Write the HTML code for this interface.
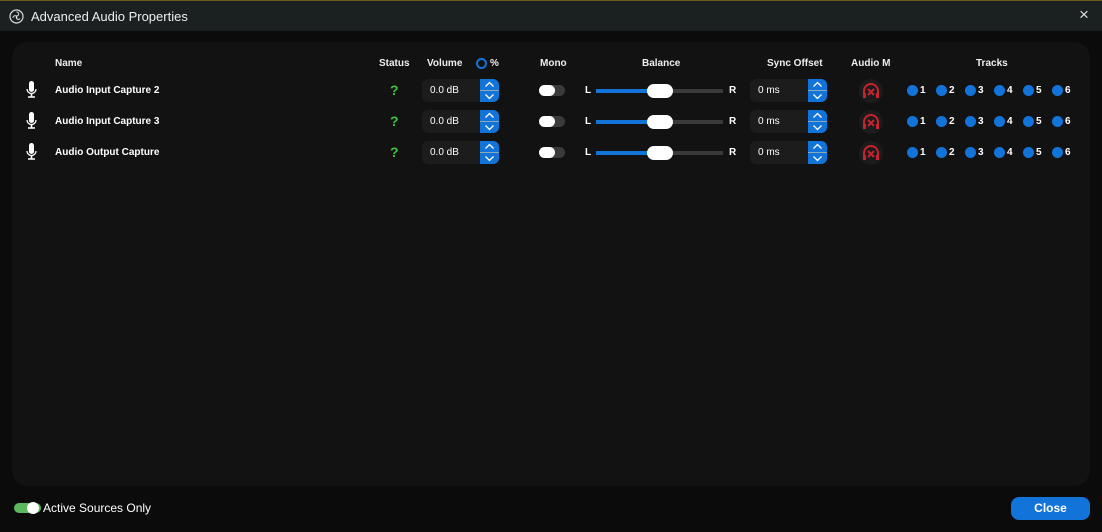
<!DOCTYPE html>
<html><head><style>
*{margin:0;padding:0;box-sizing:border-box}
body{width:1102px;height:532px;background:#0b0b0b;font-family:"Liberation Sans",sans-serif;color:#fff;position:relative;overflow:hidden}
.a{position:absolute}
.title{left:0;top:0;width:1102px;height:31px;background:#1b2020;border-top:1px solid #6b5a1c}
.panel{left:12px;top:42px;width:1078px;height:444px;background:#121212;border-radius:16px}
.h{font-size:10px;font-weight:bold;top:58px;color:#eee}
.n{font-size:10px;font-weight:bold;left:55px}
.sp{width:78px;height:23px;background:#1c1c1c;border-radius:6px;font-size:10px;padding:6px 0 0 8px}
.btn{width:19px;height:23px;background:#1273d8;border-radius:0 6px 6px 0;left:58px;top:0}
.btn:after{content:"";position:absolute;left:0;top:11px;width:19px;height:1px;background:#8ab}
.btn svg{position:absolute;left:4px}
.tg{width:26px;height:11px;background:#3a3a3a;border-radius:6px}
.tg:before{content:"";position:absolute;left:0;top:0;width:16px;height:11px;background:#fff;border-radius:6px}
.dot{width:11px;height:11px;border-radius:50%;background:#1273d8}
.tn{font-size:10px;font-weight:bold}
</style></head><body>
<div class="a title">
<svg class="a" style="left:9px;top:8px" width="15" height="15" viewBox="0 0 15 15"><circle cx="7.5" cy="7.5" r="6.5" fill="none" stroke="#ddd" stroke-width="1.2"/><path d="M7.5 3a2 2 0 1 1-1 3.5M4 9a2 2 0 1 1 3.5 1M11 9.5a2 2 0 1 1-2-3" fill="none" stroke="#ddd" stroke-width="1"/></svg>
<div class="a" style="left:31px;top:8px;font-size:13px;color:#eee">Advanced Audio Properties</div>
<div class="a" style="left:1079px;top:4px;font-size:17px;color:#ddd">×</div>
</div>
<div class="a panel"></div>
<div class="a h" style="left:55px">Name</div>
<div class="a h" style="left:379px">Status</div>
<div class="a h" style="left:427px">Volume</div>
<div class="a" style="left:476px;top:58px;width:11px;height:11px;border:2px solid #1273d8;border-radius:50%"></div>
<div class="a h" style="left:490px">%</div>
<div class="a h" style="left:540px">Mono</div>
<div class="a h" style="left:642px">Balance</div>
<div class="a h" style="left:767px">Sync Offset</div>
<div class="a h" style="left:851px">Audio M</div>
<div class="a h" style="left:976px">Tracks</div>

<div class="a" style="left:0;top:79px;width:1102px;height:24px">
<svg class="a" style="left:26px;top:2px" width="11" height="18" viewBox="0 0 11 18"><rect x="3" y="0" width="5" height="11" rx="2.5" fill="#fff"/><path d="M1 8a4.5 4.5 0 0 0 9 0" fill="none" stroke="#fff" stroke-width="1.3"/><path d="M5.5 12.5v3M2 16h7" stroke="#fff" stroke-width="1.6"/></svg>
<div class="a n" style="top:6px">Audio Input Capture 2</div>
<div class="a" style="left:390px;top:3px;color:#3cc43c;font-weight:bold;font-size:14px">?</div>
<div class="a sp" style="left:422px;top:0">0.0 dB<div class="a btn"><svg style="top:2px" width="11" height="7"><path d="M1.5 5.5l4-4 4 4" fill="none" stroke="#fff" stroke-width="1.3"/></svg><svg style="top:14px" width="11" height="7"><path d="M1.5 1.5l4 4 4-4" fill="none" stroke="#fff" stroke-width="1.3"/></svg></div></div>
<div class="a tg" style="left:539px;top:6px"></div>
<div class="a tn" style="left:585px;top:6px">L</div>
<div class="a" style="left:596px;top:10px;width:127px;height:4px;background:#3a3a3a"></div>
<div class="a" style="left:596px;top:10px;width:52px;height:4px;background:#1273d8"></div>
<div class="a" style="left:647px;top:5px;width:26px;height:14px;background:#fff;border-radius:7px"></div>
<div class="a tn" style="left:729px;top:6px">R</div>
<div class="a sp" style="left:750px;top:0">0 ms<div class="a btn"><svg style="top:2px" width="11" height="7"><path d="M1.5 5.5l4-4 4 4" fill="none" stroke="#fff" stroke-width="1.3"/></svg><svg style="top:14px" width="11" height="7"><path d="M1.5 1.5l4 4 4-4" fill="none" stroke="#fff" stroke-width="1.3"/></svg></div></div>
<div class="a" style="left:859px;top:0;width:24px;height:24px;border-radius:50%;background:#1b1b1b"></div>
<svg class="a" style="left:862px;top:4px" width="18" height="16" viewBox="0 0 18 16"><path d="M2 12V8a7 7 0 0 1 14 0v4" fill="none" stroke="#c8222e" stroke-width="2"/><rect x="1" y="10" width="3" height="5" fill="#c8222e"/><rect x="14" y="10" width="3" height="5" fill="#c8222e"/><path d="M6 6l6 6M12 6l-6 6" stroke="#c8222e" stroke-width="2"/></svg>
<div class="a dot" style="left:907px;top:6px"></div><div class="a tn" style="left:920px;top:6px">1</div>
<div class="a dot" style="left:936px;top:6px"></div><div class="a tn" style="left:949px;top:6px">2</div>
<div class="a dot" style="left:965px;top:6px"></div><div class="a tn" style="left:978px;top:6px">3</div>
<div class="a dot" style="left:994px;top:6px"></div><div class="a tn" style="left:1007px;top:6px">4</div>
<div class="a dot" style="left:1023px;top:6px"></div><div class="a tn" style="left:1036px;top:6px">5</div>
<div class="a dot" style="left:1052px;top:6px"></div><div class="a tn" style="left:1065px;top:6px">6</div>
</div>

<div class="a" style="left:0;top:110px;width:1102px;height:24px">
<svg class="a" style="left:26px;top:2px" width="11" height="18" viewBox="0 0 11 18"><rect x="3" y="0" width="5" height="11" rx="2.5" fill="#fff"/><path d="M1 8a4.5 4.5 0 0 0 9 0" fill="none" stroke="#fff" stroke-width="1.3"/><path d="M5.5 12.5v3M2 16h7" stroke="#fff" stroke-width="1.6"/></svg>
<div class="a n" style="top:6px">Audio Input Capture 3</div>
<div class="a" style="left:390px;top:3px;color:#3cc43c;font-weight:bold;font-size:14px">?</div>
<div class="a sp" style="left:422px;top:0">0.0 dB<div class="a btn"><svg style="top:2px" width="11" height="7"><path d="M1.5 5.5l4-4 4 4" fill="none" stroke="#fff" stroke-width="1.3"/></svg><svg style="top:14px" width="11" height="7"><path d="M1.5 1.5l4 4 4-4" fill="none" stroke="#fff" stroke-width="1.3"/></svg></div></div>
<div class="a tg" style="left:539px;top:6px"></div>
<div class="a tn" style="left:585px;top:6px">L</div>
<div class="a" style="left:596px;top:10px;width:127px;height:4px;background:#3a3a3a"></div>
<div class="a" style="left:596px;top:10px;width:52px;height:4px;background:#1273d8"></div>
<div class="a" style="left:647px;top:5px;width:26px;height:14px;background:#fff;border-radius:7px"></div>
<div class="a tn" style="left:729px;top:6px">R</div>
<div class="a sp" style="left:750px;top:0">0 ms<div class="a btn"><svg style="top:2px" width="11" height="7"><path d="M1.5 5.5l4-4 4 4" fill="none" stroke="#fff" stroke-width="1.3"/></svg><svg style="top:14px" width="11" height="7"><path d="M1.5 1.5l4 4 4-4" fill="none" stroke="#fff" stroke-width="1.3"/></svg></div></div>
<div class="a" style="left:859px;top:0;width:24px;height:24px;border-radius:50%;background:#1b1b1b"></div>
<svg class="a" style="left:862px;top:4px" width="18" height="16" viewBox="0 0 18 16"><path d="M2 12V8a7 7 0 0 1 14 0v4" fill="none" stroke="#c8222e" stroke-width="2"/><rect x="1" y="10" width="3" height="5" fill="#c8222e"/><rect x="14" y="10" width="3" height="5" fill="#c8222e"/><path d="M6 6l6 6M12 6l-6 6" stroke="#c8222e" stroke-width="2"/></svg>
<div class="a dot" style="left:907px;top:6px"></div><div class="a tn" style="left:920px;top:6px">1</div>
<div class="a dot" style="left:936px;top:6px"></div><div class="a tn" style="left:949px;top:6px">2</div>
<div class="a dot" style="left:965px;top:6px"></div><div class="a tn" style="left:978px;top:6px">3</div>
<div class="a dot" style="left:994px;top:6px"></div><div class="a tn" style="left:1007px;top:6px">4</div>
<div class="a dot" style="left:1023px;top:6px"></div><div class="a tn" style="left:1036px;top:6px">5</div>
<div class="a dot" style="left:1052px;top:6px"></div><div class="a tn" style="left:1065px;top:6px">6</div>
</div>

<div class="a" style="left:0;top:141px;width:1102px;height:24px">
<svg class="a" style="left:26px;top:2px" width="11" height="18" viewBox="0 0 11 18"><rect x="3" y="0" width="5" height="11" rx="2.5" fill="#fff"/><path d="M1 8a4.5 4.5 0 0 0 9 0" fill="none" stroke="#fff" stroke-width="1.3"/><path d="M5.5 12.5v3M2 16h7" stroke="#fff" stroke-width="1.6"/></svg>
<div class="a n" style="top:6px">Audio Output Capture</div>
<div class="a" style="left:390px;top:3px;color:#3cc43c;font-weight:bold;font-size:14px">?</div>
<div class="a sp" style="left:422px;top:0">0.0 dB<div class="a btn"><svg style="top:2px" width="11" height="7"><path d="M1.5 5.5l4-4 4 4" fill="none" stroke="#fff" stroke-width="1.3"/></svg><svg style="top:14px" width="11" height="7"><path d="M1.5 1.5l4 4 4-4" fill="none" stroke="#fff" stroke-width="1.3"/></svg></div></div>
<div class="a tg" style="left:539px;top:6px"></div>
<div class="a tn" style="left:585px;top:6px">L</div>
<div class="a" style="left:596px;top:10px;width:127px;height:4px;background:#3a3a3a"></div>
<div class="a" style="left:596px;top:10px;width:52px;height:4px;background:#1273d8"></div>
<div class="a" style="left:647px;top:5px;width:26px;height:14px;background:#fff;border-radius:7px"></div>
<div class="a tn" style="left:729px;top:6px">R</div>
<div class="a sp" style="left:750px;top:0">0 ms<div class="a btn"><svg style="top:2px" width="11" height="7"><path d="M1.5 5.5l4-4 4 4" fill="none" stroke="#fff" stroke-width="1.3"/></svg><svg style="top:14px" width="11" height="7"><path d="M1.5 1.5l4 4 4-4" fill="none" stroke="#fff" stroke-width="1.3"/></svg></div></div>
<div class="a" style="left:859px;top:0;width:24px;height:24px;border-radius:50%;background:#1b1b1b"></div>
<svg class="a" style="left:862px;top:4px" width="18" height="16" viewBox="0 0 18 16"><path d="M2 12V8a7 7 0 0 1 14 0v4" fill="none" stroke="#c8222e" stroke-width="2"/><rect x="1" y="10" width="3" height="5" fill="#c8222e"/><rect x="14" y="10" width="3" height="5" fill="#c8222e"/><path d="M6 6l6 6M12 6l-6 6" stroke="#c8222e" stroke-width="2"/></svg>
<div class="a dot" style="left:907px;top:6px"></div><div class="a tn" style="left:920px;top:6px">1</div>
<div class="a dot" style="left:936px;top:6px"></div><div class="a tn" style="left:949px;top:6px">2</div>
<div class="a dot" style="left:965px;top:6px"></div><div class="a tn" style="left:978px;top:6px">3</div>
<div class="a dot" style="left:994px;top:6px"></div><div class="a tn" style="left:1007px;top:6px">4</div>
<div class="a dot" style="left:1023px;top:6px"></div><div class="a tn" style="left:1036px;top:6px">5</div>
<div class="a dot" style="left:1052px;top:6px"></div><div class="a tn" style="left:1065px;top:6px">6</div>
</div>

<div class="a" style="left:14px;top:503px;width:27px;height:10px;background:#5cb85c;border-radius:5px"></div>
<div class="a" style="left:27px;top:502px;width:12px;height:12px;background:#fff;border-radius:6px"></div>
<div class="a" style="left:43px;top:501px;font-size:12px;color:#fff">Active Sources Only</div>
<div class="a" style="left:1011px;top:497px;width:79px;height:23px;background:#1273d8;border-radius:8px;font-size:12px;font-weight:bold;text-align:center;line-height:23px">Close</div>
</body></html>
